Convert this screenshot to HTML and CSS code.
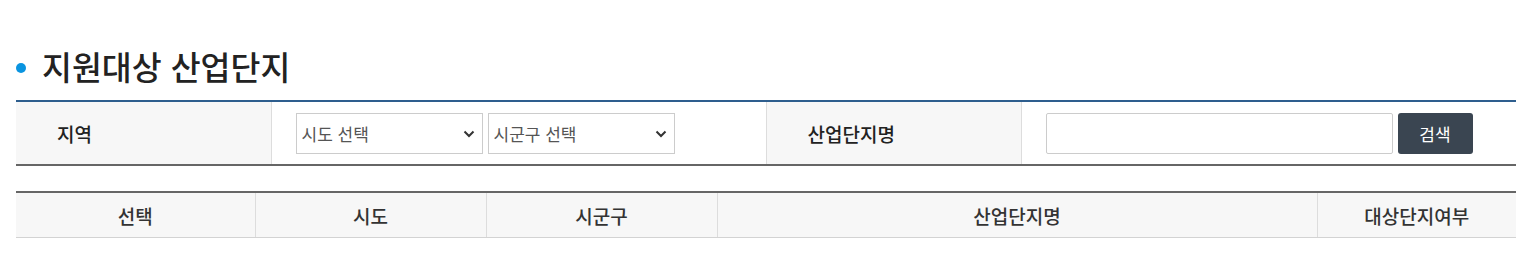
FILE: index.html
```html
<!DOCTYPE html>
<html lang="ko">
<head>
  <meta charset="UTF-8">
  <meta name="viewport" content="width=device-width, initial-scale=1.0">
  <title>지원대상 산업단지</title>
  <link rel="stylesheet" href="styles.css">
</head>
<body>
  <div class="page">
    <h2 class="page-title"><span class="bullet"></span>지원대상 산업단지</h2>

    <table class="search-table">
      <colgroup>
        <col class="col-label">
        <col class="col-field">
        <col class="col-label">
        <col class="col-field">
      </colgroup>
      <tr>
        <th>지역</th>
        <td>
          <div class="field-row">
            <div class="select-box">
              <select>
                <option>시도 선택</option>
              </select>
              <svg class="chevron" width="12" height="8" viewBox="0 0 12 8"><path d="M1.5 1.5 L6 6 L10.5 1.5" fill="none" stroke="#333" stroke-width="2"/></svg>
            </div>
            <div class="select-box">
              <select>
                <option>시군구 선택</option>
              </select>
              <svg class="chevron" width="12" height="8" viewBox="0 0 12 8"><path d="M1.5 1.5 L6 6 L10.5 1.5" fill="none" stroke="#333" stroke-width="2"/></svg>
            </div>
          </div>
        </td>
        <th>산업단지명</th>
        <td>
          <div class="field-row">
            <input type="text" class="text-input">
            <button class="btn-search">검색</button>
          </div>
        </td>
      </tr>
    </table>

    <table class="list-table">
      <colgroup>
        <col style="width:239px">
        <col style="width:231px">
        <col style="width:231px">
        <col style="width:600px">
        <col style="width:199px">
      </colgroup>
      <thead>
        <tr>
          <th>선택</th>
          <th>시도</th>
          <th>시군구</th>
          <th>산업단지명</th>
          <th>대상단지여부</th>
        </tr>
      </thead>
    </table>
  </div>
</body>
</html>
```

FILE: styles.css
```css
body {
  margin: 0;
  background-color: #fff;
  font-family: "Noto Sans CJK KR", "Noto Sans", sans-serif;
  color: #222;
}

.page {
  width: 1500px;
  padding: 42px 16px 0;
}

.page-title {
  display: flex;
  align-items: center;
  margin: 0 0 12px;
  height: 46px;
  font-size: 32.5px;
  font-weight: 500;
  color: #222;
}

.bullet {
  width: 10px;
  height: 10px;
  border-radius: 50%;
  background-color: #0a94e0;
  margin-right: 16px;
  margin-top: 6px;
}

/* search box */
.search-table {
  width: 1500px;
  table-layout: fixed;
  border-collapse: collapse;
  border-top: 2px solid #2e5e8e;
  border-bottom: 2px solid #666;
}

.col-label {
  width: 255px;
}

.col-field {
  width: 495px;
}

.search-table th {
  height: 62px;
  padding: 0 0 0 41px;
  background-color: #f7f7f7;
  text-align: left;
  font-size: 19px;
  font-weight: 500;
  color: #222;
  border-right: 1px solid #ddd;
}

.search-table td {
  padding: 0 24px;
  border-right: 1px solid #ddd;
}

.search-table td:last-child {
  border-right: none;
}

.field-row {
  display: flex;
  gap: 5px;
}

.select-box {
  position: relative;
  width: 187px;
  height: 41px;
}

.select-box select {
  appearance: none;
  -webkit-appearance: none;
  width: 100%;
  height: 100%;
  padding: 0 24px 0 5px;
  border: 1px solid #ccc;
  border-radius: 0;
  background-color: #fff;
  font-family: inherit;
  font-size: 17px;
  color: #555;
}

.chevron {
  position: absolute;
  right: 8px;
  top: 17px;
  pointer-events: none;
}

.text-input {
  width: 347px;
  height: 41px;
  box-sizing: border-box;
  border: 1px solid #ccc;
  border-radius: 2px;
  padding: 0 8px;
  font-family: inherit;
  font-size: 17px;
}

.btn-search {
  width: 75px;
  height: 41px;
  border: none;
  border-radius: 3px;
  background-color: #3a4551;
  color: #fff;
  font-family: inherit;
  font-size: 17px;
  cursor: pointer;
}

/* result list */
.list-table {
  width: 1500px;
  margin-top: 25px;
  table-layout: fixed;
  border-collapse: collapse;
  border-top: 2px solid #666;
}

.list-table th {
  height: 44px;
  padding: 0;
  background-color: #f7f7f7;
  border-right: 1px solid #ddd;
  border-bottom: 1px solid #d3d3d3;
  font-size: 19px;
  font-weight: 500;
  color: #333;
}

.list-table th:last-child {
  border-right: none;
}
```
